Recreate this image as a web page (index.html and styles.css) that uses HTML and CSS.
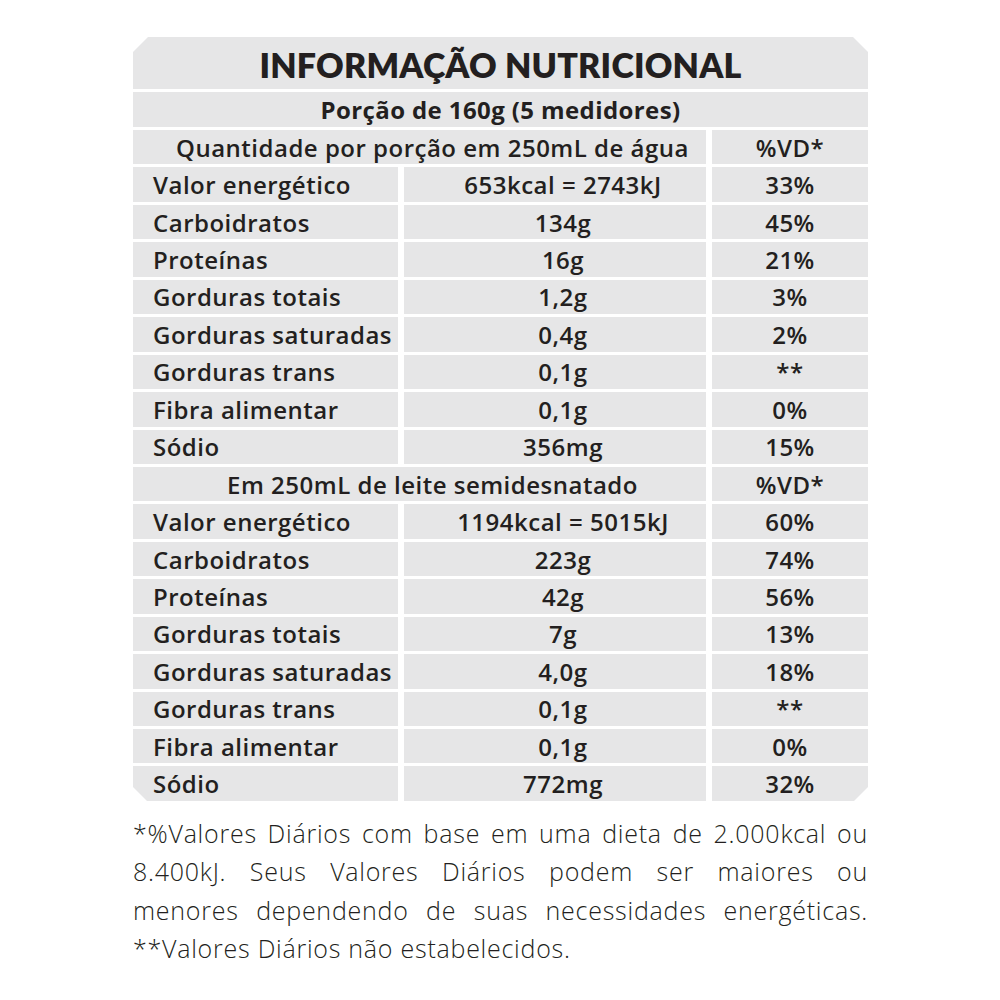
FILE: index.html
```html
<!DOCTYPE html>
<html lang="pt-BR">
<head>
<meta charset="utf-8">
<title>Informação Nutricional</title>
<link rel="stylesheet" href="styles.css">
</head>
<body>
<main class="page">
  <div class="table">
    <div class="cell title span3">INFORMAÇÃO NUTRICIONAL</div>
    <div class="cell portion span3">Porção de 160g (5 medidores)</div>

    <div class="cell head span2">Quantidade por porção em 250mL de água</div>
    <div class="cell vd">%VD*</div>
    <div class="cell name">Valor energético</div><div class="cell val">653kcal = 2743kJ</div><div class="cell vd">33%</div>
    <div class="cell name">Carboidratos</div><div class="cell val">134g</div><div class="cell vd">45%</div>
    <div class="cell name">Proteínas</div><div class="cell val">16g</div><div class="cell vd">21%</div>
    <div class="cell name">Gorduras totais</div><div class="cell val">1,2g</div><div class="cell vd">3%</div>
    <div class="cell name">Gorduras saturadas</div><div class="cell val">0,4g</div><div class="cell vd">2%</div>
    <div class="cell name">Gorduras trans</div><div class="cell val">0,1g</div><div class="cell vd">**</div>
    <div class="cell name">Fibra alimentar</div><div class="cell val">0,1g</div><div class="cell vd">0%</div>
    <div class="cell name">Sódio</div><div class="cell val">356mg</div><div class="cell vd">15%</div>

    <div class="cell head span2">Em 250mL de leite semidesnatado</div>
    <div class="cell vd">%VD*</div>
    <div class="cell name">Valor energético</div><div class="cell val">1194kcal = 5015kJ</div><div class="cell vd">60%</div>
    <div class="cell name">Carboidratos</div><div class="cell val">223g</div><div class="cell vd">74%</div>
    <div class="cell name">Proteínas</div><div class="cell val">42g</div><div class="cell vd">56%</div>
    <div class="cell name">Gorduras totais</div><div class="cell val">7g</div><div class="cell vd">13%</div>
    <div class="cell name">Gorduras saturadas</div><div class="cell val">4,0g</div><div class="cell vd">18%</div>
    <div class="cell name">Gorduras trans</div><div class="cell val">0,1g</div><div class="cell vd">**</div>
    <div class="cell name">Fibra alimentar</div><div class="cell val">0,1g</div><div class="cell vd">0%</div>
    <div class="cell name">Sódio</div><div class="cell val">772mg</div><div class="cell vd">32%</div>
  </div>

  <div class="notes">
    <span class="jline">*%Valores Diários com base em uma dieta de 2.000kcal ou</span>
    <span class="jline">8.400kJ. Seus Valores Diários podem ser maiores ou</span>
    <span class="jline">menores dependendo de suas necessidades energéticas.</span>
    <span class="line">**Valores Diários não estabelecidos.</span>
  </div>
</main>
</body>
</html>
```
FILE: styles.css
```css
html, body {
  margin: 0;
  padding: 0;
  background: #ffffff;
}

.page {
  width: 735px;
  padding: 37px 0 0 133px;
  font-family: "Open Sans", Lato, "Liberation Sans", sans-serif;
  color: #231f20;
}

.table {
  display: grid;
  grid-template-columns: 265px 302px 156px;
  grid-template-rows: 52px 35px;
  grid-auto-rows: 34.44px;
  gap: 3px 6px;
  background: #ffffff;
  clip-path: polygon(15px 0, calc(100% - 15px) 0, 100% 15px, 100% calc(100% - 14px), calc(100% - 14px) 100%, 14px 100%, 0 calc(100% - 14px), 0 15px);
}

.cell {
  background: #e6e6e7;
  display: flex;
  align-items: center;
  font-size: 24px;
  font-weight: 600;
  letter-spacing: 0.5px;
  white-space: nowrap;
}

.span3 { grid-column: 1 / 4; justify-content: center; }
.span2 { grid-column: 1 / 3; }

.title {
  font-family: Lato, "Open Sans", sans-serif;
  font-size: 34px;
  font-weight: 800;
  letter-spacing: 0.2px;
  padding-top: 2px;
  box-sizing: border-box;
}

.portion {
  font-weight: 700;
  letter-spacing: 0.4px;
}

.head {
  justify-content: center;
  padding-left: 26px;
}

.name {
  padding-left: 20px;
}

.val {
  justify-content: center;
  padding-left: 16px;
}

.vd {
  justify-content: center;
}

.notes {
  margin-top: 13px;
  font-family: "Open Sans", Lato, "Liberation Sans", sans-serif;
  font-weight: 300;
  font-size: 25px;
  letter-spacing: 0.75px;
  line-height: 38.5px;
  color: #231f20;
}

.jline {
  display: block;
  text-align: justify;
  text-align-last: justify;
}

.line {
  display: block;
}
```
